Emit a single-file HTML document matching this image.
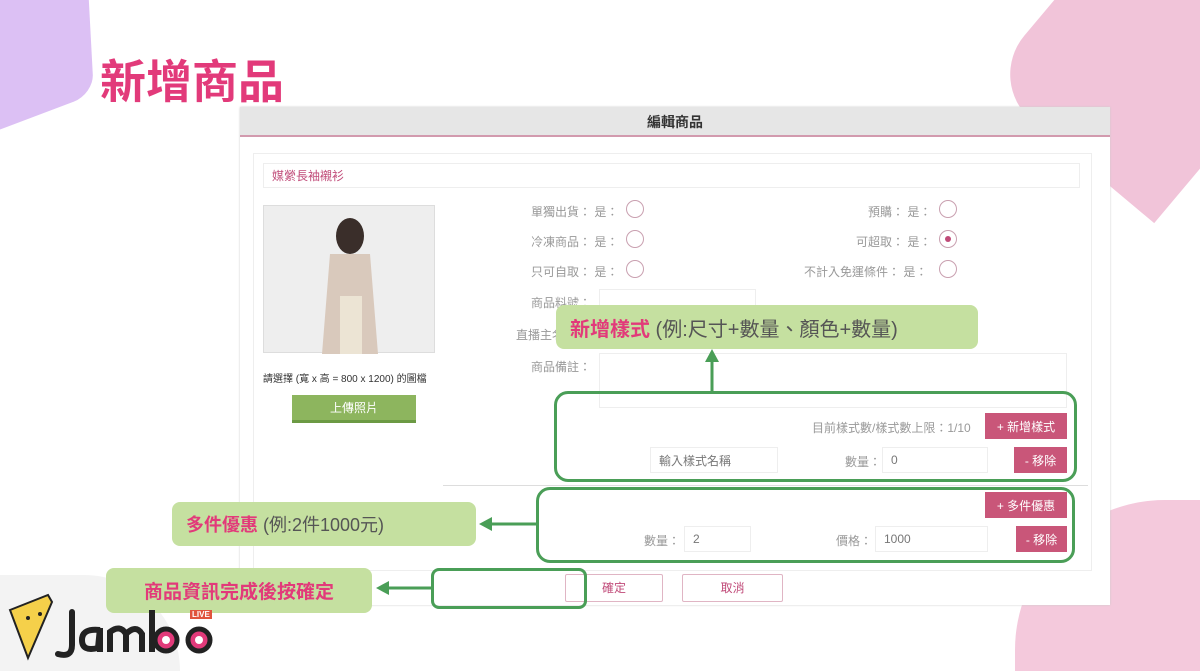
<!DOCTYPE html>
<html><head><meta charset="utf-8"><style>
*{margin:0;padding:0;box-sizing:border-box}
html,body{width:1200px;height:671px;overflow:hidden}
body{background:#fff;font-family:"Liberation Sans","Noto Sans CJK TC",sans-serif;color:#888}
#w{position:relative;width:1200px;height:671px;overflow:hidden}
.a{position:absolute}
.lbl{font-size:12px;color:#999}
.rad{position:absolute;width:18px;height:18px;border:1px solid #c9a0b0;border-radius:50%;background:#fff}
.inp{position:absolute;border:1px solid #eee;background:#fff;font-size:12px;color:#777;padding-left:8px;display:flex;align-items:center}
.btn{position:absolute;background:#c95679;color:#fff;font-size:12px;display:flex;align-items:center;justify-content:center}
.gbox{position:absolute;border:3px solid #4a9e57;border-radius:14px}
.note{position:absolute;background:#c5e0a0;border-radius:8px;display:flex;align-items:center;color:#555}
</style></head><body><div id="w">
<div class="a" style="left:-40px;top:-30px;width:130px;height:150px;background:#dcc0f4;border-radius:0 0 20px 0;transform:skewY(-18deg) rotate(-3deg)"></div>
<div class="a" style="left:1030px;top:-40px;width:220px;height:250px;background:#f1c4d9;border-radius:60px 0 0 60px;transform:rotate(40deg);transform-origin:70% 50%"></div>
<div class="a" style="left:1015px;top:500px;width:185px;height:171px;background:#f4c9dc;border-radius:150px 0 0 0"></div>
<div class="a" style="left:0;top:575px;width:180px;height:96px;background:#f3f3f3;border-radius:0 100px 0 0"></div>
<div class="a" style="left:100px;top:46px;font-size:46px;font-weight:bold;color:#e23a7a">新增商品</div>

<div class="a" style="left:240px;top:107px;width:870px;height:498px;background:#fff;box-shadow:0 0 2px #ccc"></div>
<div class="a" style="left:240px;top:107px;width:870px;height:30px;background:#e6e6e6;border-bottom:2px solid #d29aae;font-size:14px;font-weight:bold;color:#333;text-align:center;line-height:30px">編輯商品</div>
<div class="a" style="left:253px;top:153px;width:839px;height:418px;border:1px solid #eee"></div>
<div class="inp" style="left:263px;top:163px;width:817px;height:25px;color:#c04a78">媒縈長袖襯衫</div>
<div class="a" style="left:263px;top:205px;width:172px;height:148px;background:#eee;border:1px solid #ddd">
<svg width="172" height="148"><ellipse cx="86" cy="30" rx="14" ry="18" fill="#3a2e2a"/><path d="M66 48 L106 48 L114 148 L58 148Z" fill="#d9c9bc"/><rect x="76" y="90" width="22" height="58" fill="#ece4d4"/></svg></div>
<div class="a" style="left:263px;top:370px;font-size:10px;color:#333">請選擇 (寬 x 高 = 800 x 1200) 的圖檔</div>
<div class="btn" style="left:292px;top:395px;width:124px;height:28px;background:#8db55e;border-bottom:3px solid #6c9a44">上傳照片</div>

<div class="a lbl" style="left:531px;top:203px">單獨出貨： 是：</div><div class="rad" style="left:626px;top:200px"></div>
<div class="a lbl" style="left:531px;top:233px">冷凍商品： 是：</div><div class="rad" style="left:626px;top:230px"></div>
<div class="a lbl" style="left:531px;top:263px">只可自取： 是：</div><div class="rad" style="left:626px;top:260px"></div>
<div class="a lbl" style="left:868px;top:203px">預購： 是：</div><div class="rad" style="left:939px;top:200px"></div>
<div class="a lbl" style="left:856px;top:233px">可超取： 是：</div><div class="rad" style="left:939px;top:230px"><div style="width:6px;height:6px;border-radius:50%;background:#c04a78;margin:5px"></div></div>
<div class="a lbl" style="left:804px;top:263px">不計入免運條件： 是：</div><div class="rad" style="left:939px;top:260px"></div>
<div class="a lbl" style="left:531px;top:294px">商品料號：</div><div class="inp" style="left:599px;top:289px;width:157px;height:26px"></div>
<div class="a lbl" style="left:516px;top:326px">直播主名</div>
<div class="a lbl" style="left:531px;top:358px">商品備註：</div><div class="inp" style="left:599px;top:353px;width:468px;height:55px"></div>

<div class="a lbl" style="left:812px;top:419px">目前樣式數/樣式數上限：1/10</div>
<div class="btn" style="left:985px;top:413px;width:82px;height:26px">+ 新增樣式</div>
<div class="inp" style="left:650px;top:447px;width:128px;height:26px">輸入樣式名稱</div>
<div class="a lbl" style="left:845px;top:453px">數量：</div>
<div class="inp" style="left:882px;top:447px;width:106px;height:26px">0</div>
<div class="btn" style="left:1014px;top:447px;width:53px;height:26px">- 移除</div>
<div class="a" style="left:443px;top:485px;width:645px;height:1px;background:#ddd"></div>
<div class="btn" style="left:985px;top:492px;width:82px;height:26px">+ 多件優惠</div>
<div class="a lbl" style="left:644px;top:532px">數量：</div>
<div class="inp" style="left:684px;top:526px;width:67px;height:26px">2</div>
<div class="a lbl" style="left:836px;top:532px">價格：</div>
<div class="inp" style="left:875px;top:526px;width:113px;height:26px">1000</div>
<div class="btn" style="left:1016px;top:526px;width:51px;height:26px">- 移除</div>
<div class="a" style="left:565px;top:574px;width:98px;height:28px;border:1px solid #e0b5c4;border-radius:2px;font-size:12px;color:#c04a78;text-align:center;line-height:26px">確定</div>
<div class="a" style="left:682px;top:574px;width:101px;height:28px;border:1px solid #e0b5c4;border-radius:2px;font-size:12px;color:#c04a78;text-align:center;line-height:26px">取消</div>

<div class="gbox" style="left:554px;top:391px;width:523px;height:91px"></div>
<div class="gbox" style="left:536px;top:487px;width:539px;height:76px"></div>
<div class="gbox" style="left:431px;top:568px;width:156px;height:41px;border-radius:8px"></div>

<div class="note" style="left:556px;top:305px;width:422px;height:44px;padding-left:14px;font-size:20px"><b style="color:#e23a7a">新增樣式</b>&nbsp;(例:尺寸+數量、顏色+數量)</div>
<div class="note" style="left:172px;top:502px;width:304px;height:44px;padding-left:14px;font-size:18px"><b style="color:#e23a7a">多件優惠</b>&nbsp;(例:2件1000元)</div>
<div class="note" style="left:106px;top:568px;width:266px;height:45px;justify-content:center;font-size:19px"><b style="color:#e23a7a">商品資訊完成後按確定</b></div>

<svg class="a" style="left:0;top:0" width="1200" height="671">
<g stroke="#4a9e57" stroke-width="3" fill="#4a9e57">
<line x1="712" y1="391" x2="712" y2="360"/><path d="M705 362 L712 349 L719 362Z" stroke="none"/>
<line x1="536" y1="524" x2="490" y2="524"/><path d="M492 517 L479 524 L492 531Z" stroke="none"/>
<line x1="431" y1="588" x2="387" y2="588"/><path d="M389 581 L376 588 L389 595Z" stroke="none"/>
</g>
<path d="M10 610 L48 595 L52 602 L28 658Z" fill="#f5d04a" stroke="#222" stroke-width="2"/>
<circle cx="28" cy="618" r="2" fill="#222"/><circle cx="40" cy="614" r="2" fill="#222"/>
<path d="M72 612 L72 645 Q72 658 58 654" stroke="#222" stroke-width="6" fill="none" stroke-linecap="round"/>
<path d="M100 630 Q82 628 82 640 Q82 652 98 648 L100 628 L100 652" stroke="#222" stroke-width="6" fill="none"/>
<path d="M110 652 L110 632 Q120 624 126 634 L126 652 M126 634 Q136 624 142 634 L142 652" stroke="#222" stroke-width="6" fill="none"/>
<path d="M152 610 L152 652" stroke="#222" stroke-width="6"/>
<circle cx="166" cy="640" r="11" fill="#e23a7a" stroke="#222" stroke-width="5"/>
<circle cx="199" cy="640" r="11" fill="#e23a7a" stroke="#222" stroke-width="5"/>
<circle cx="166" cy="640" r="4" fill="#fff"/><circle cx="199" cy="640" r="4" fill="#fff"/>
</svg>
<div class="a" style="left:190px;top:610px;font-size:8px;color:#fff;background:#e0543d;padding:0 2px;font-weight:bold">LIVE</div>
</div></body></html>
